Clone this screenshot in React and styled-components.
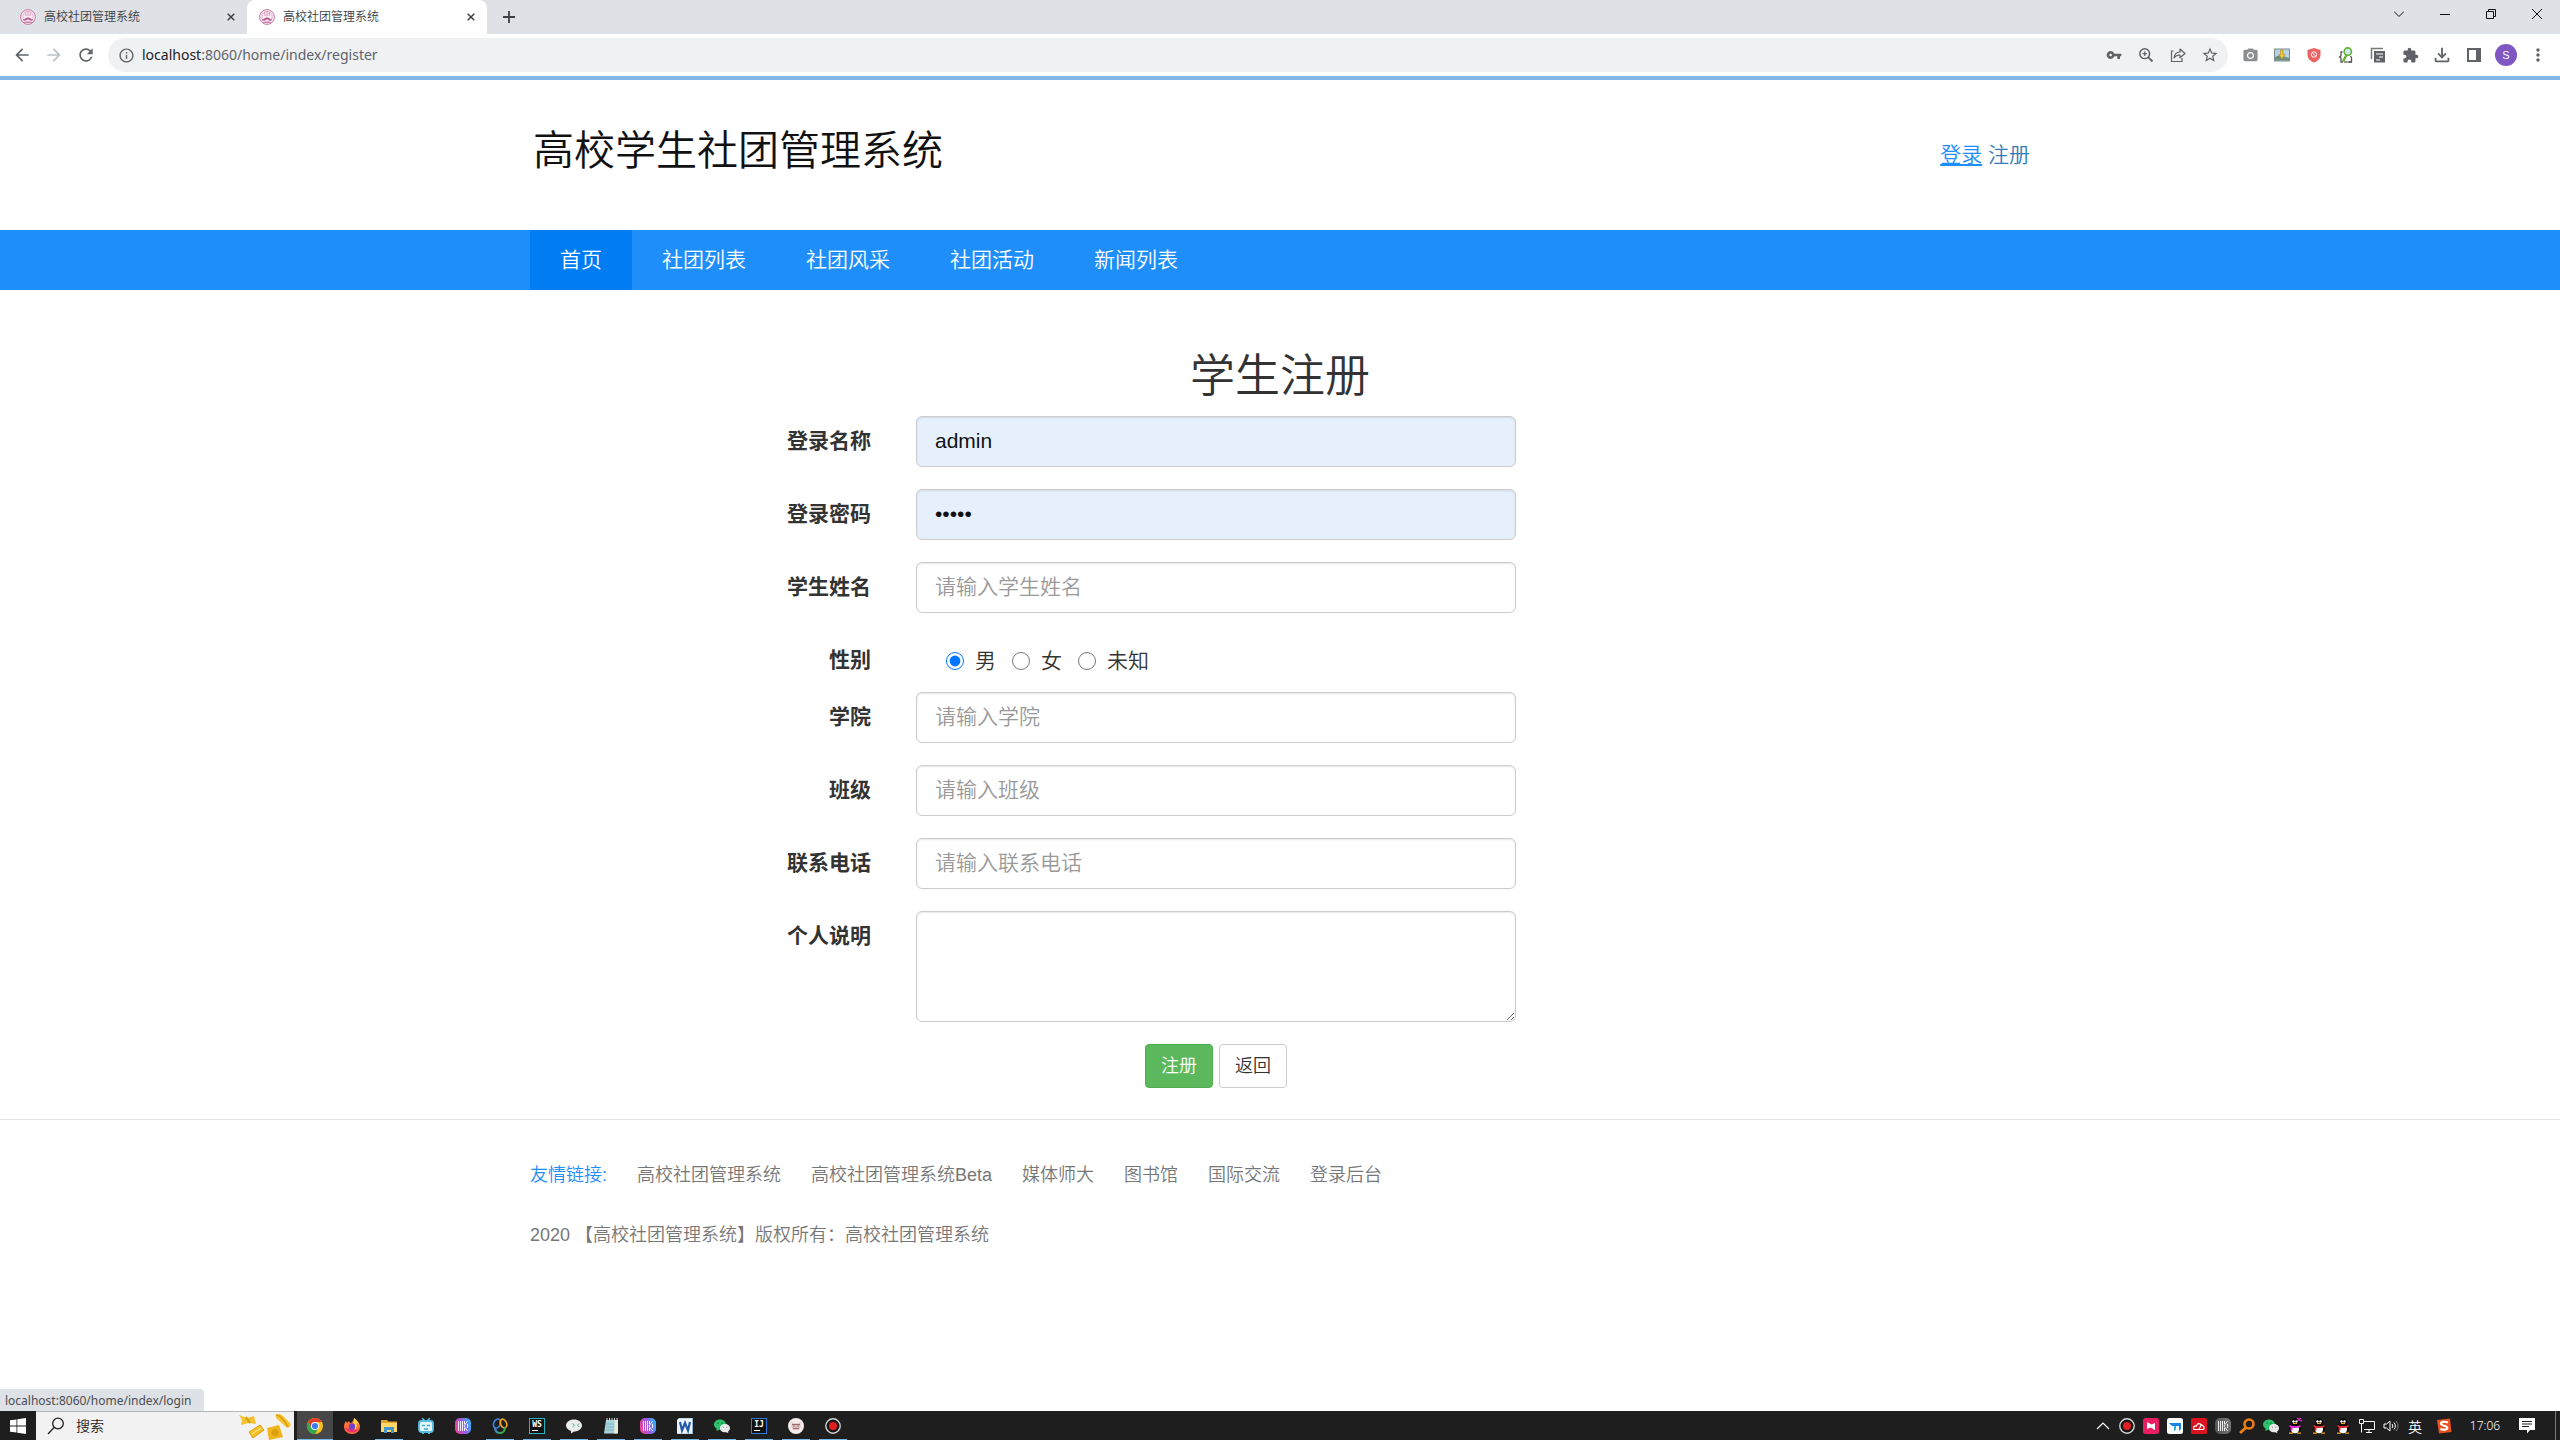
import React from "react";
import styled, { createGlobalStyle, css } from "styled-components";
import {
  MdArrowBack, MdArrowForward, MdRefresh, MdInfoOutline, MdVpnKey,
  MdStarBorder, MdExtension, MdMoreVert, MdPhotoCamera, MdOutlineFileDownload,
} from "react-icons/md";

const pageFont = `"Liberation Sans", "Noto Sans CJK SC", sans-serif`;
const chromeFont = `"Noto Sans", "Noto Sans CJK SC", sans-serif`;

const GlobalStyle = createGlobalStyle`
  *, *::before, *::after { box-sizing: border-box; }
  body { margin: 0; background: #fff; font-family: ${pageFont}; font-weight: 350; color: #333; }
  button, input, textarea { font-family: inherit; font-weight: inherit; margin: 0; }
  svg { display: block; flex: none; }
`;

const Desktop = styled.div`
  min-height: 100vh;
  display: flex;
  flex-direction: column;
`;

/* ---------- browser frame ---------- */

const TabStrip = styled.div`
  display: flex;
  height: 34px;
  background: #dee1e6;
  font-family: ${chromeFont};
`;

const Tab = styled.div`
  display: flex;
  align-items: center;
  gap: 8px;
  width: ${(p) => (p.$active ? 240 : 247)}px;
  padding: 0 8px 0 ${(p) => (p.$active ? 12 : 20)}px;
  border-radius: 8px 8px 0 0;
  background: ${(p) => (p.$active ? "#fff" : "transparent")};
  color: #3c4043;
  font-size: 12px;
  line-height: 18px;
`;

const TabTitle = styled.span`
  flex: 1;
  white-space: nowrap;
`;

const PlainButton = styled.button`
  display: flex;
  align-items: center;
  justify-content: center;
  padding: 0;
  border: 0;
  background: none;
  color: ${(p) => p.$color || "#5f6368"};
`;

const TabButton = styled(PlainButton)`
  width: 16px;
  height: 16px;
`;

const NewTab = styled(PlainButton)`
  width: 44px;
`;

const WindowButtons = styled.div`
  display: flex;
  margin-left: auto;
`;

const WindowButton = styled(PlainButton)`
  width: 46px;
  height: 28px;
`;

const Toolbar = styled.div`
  display: flex;
  align-items: center;
  height: 46px;
  padding: 0 6px;
  border-bottom: 4px solid #84b6ea;
  background: #fff;
`;

const ToolButton = styled(PlainButton)`
  width: 32px;
  height: 32px;
`;

const AddressBar = styled.div`
  display: flex;
  align-items: center;
  flex: 1;
  height: 34px;
  margin: 0 6px;
  padding: 0 2px;
  border-radius: 17px;
  background: #f0f1f3;
`;

const AddressText = styled.div`
  flex: 1;
  color: #5f6368;
  font-family: ${chromeFont};
  font-size: 14px;
  font-weight: 400;
  line-height: 20px;

  b { color: #202124; font-weight: 400; }
`;

const Avatar = styled.span`
  width: 22px;
  height: 22px;
  border-radius: 50%;
  background: #7e57c2;
  color: #fff;
  font-size: 11px;
  line-height: 22px;
  text-align: center;
`;

/* ---------- web page ---------- */

const Viewport = styled.div`
  position: relative;
  flex: 1;
`;

const Container = styled.div`
  width: 100%;
  max-width: 1500px;
  margin: 0 auto;
`;

const Header = styled(Container)`
  display: flex;
  align-items: center;
  justify-content: space-between;
  height: 150px;
`;

const SiteName = styled.div`
  padding: 0 3px 8px;
  color: #111;
  font-size: 41px;
  line-height: 60px;
`;

const AccountLinks = styled.div`
  font-size: 21px;
  line-height: 30px;
`;

const AccountLink = styled.a`
  color: ${(p) => (p.$hover ? "#1e8efb" : "#337ab7")};
  text-decoration: ${(p) => (p.$hover ? "underline" : "none")};
  text-decoration-thickness: 2px;
  text-underline-offset: 2px;
`;

const NavBar = styled.nav`
  background: #1e8efb;
`;

const NavList = styled(Container)`
  display: flex;
`;

const NavLink = styled.a`
  padding: 15px 30px;
  background: ${(p) => (p.$active ? "#007df2" : "transparent")};
  color: #fff;
  font-size: 21px;
  line-height: 30px;
  text-decoration: none;
`;

const Form = styled.form`
  padding: 62px 0 9px;
`;

const Title = styled.h1`
  margin: 0 0 14px;
  font-size: 45px;
  font-weight: inherit;
  line-height: 50px;
  text-align: center;
`;

const FieldRow = styled.div`
  display: grid;
  grid-template-columns: 341px 600px;
  column-gap: 45px;
  margin-bottom: ${(p) => (p.$tight ? 6 : 22)}px;
`;

const labelText = css`
  padding: 10px 0 11px;
  font-size: 21px;
  font-weight: 700;
  line-height: 30px;
  text-align: right;
`;

const Label = styled.label`
  ${labelText}
`;

const GroupLabel = styled.span`
  ${labelText}
`;

const controlBox = css`
  width: 100%;
  border: 1px solid #ccc;
  border-radius: 6px;
  background: ${(p) => (p.$filled ? "#e6effc" : "#fff")};
  box-shadow: inset 0 1px 2px rgba(0, 0, 0, 0.1);
  color: #111;
  font-size: 21px;
  line-height: 30px;
  outline: 0;
`;

const Input = styled.input`
  ${controlBox}
  height: 51px;
  padding: 8px 18px 10px;
  &::placeholder { color: #999; opacity: 1; }
`;

const TextArea = styled.textarea`
  ${controlBox}
  display: block;
  height: 111px;
  padding: 8px 18px 10px;
  resize: vertical;
`;

const RadioGroup = styled.div`
  display: flex;
  align-items: center;
  gap: 16px;
  padding-left: 30px;
`;

const RadioLabel = styled.label`
  display: flex;
  align-items: center;
  gap: 11px;
  font-size: 21px;
  line-height: 30px;
`;

const Radio = styled.input`
  width: 18px;
  height: 18px;
  accent-color: #0075ff;
`;

const Actions = styled.div`
  grid-column: 2;
  display: flex;
  justify-content: center;
  gap: 6px;
`;

const ActionButton = styled.button`
  height: 44px;
  padding: 0 15px;
  border: 1px solid ${(p) => (p.$primary ? "#4cae4c" : "#ccc")};
  border-radius: 4px;
  background: ${(p) => (p.$primary ? "#5cb85c" : "#fff")};
  color: ${(p) => (p.$primary ? "#fff" : "#333")};
  font-size: 18px;
  line-height: 26px;
`;

const Footer = styled.footer`
  padding-top: 40px;
  border-top: 1px solid #e2e2e2;
  color: #777;
  font-size: 18px;
  line-height: 30px;
`;

const FooterLinks = styled(Container)`
  display: flex;
  gap: 30px;
  margin-bottom: 30px;
`;

const FooterHeading = styled.span`
  color: #1e8efb;
`;

const FooterLink = styled.a`
  color: #777;
  text-decoration: none;
`;

const StatusBubble = styled.div`
  position: absolute;
  left: 0;
  bottom: 0;
  min-width: 204px;
  padding: 3px 8px 1px 5px;
  border-radius: 0 4px 0 0;
  background: #dee1e6;
  color: #4a4d51;
  font-family: ${chromeFont};
  font-size: 12px;
  font-weight: 400;
  line-height: 18px;
`;

/* ---------- taskbar ---------- */

const TaskBar = styled.div`
  display: flex;
  height: 29px;
  background: #1e1e1e;
  color: #fff;
  font-family: ${chromeFont};
`;

const StartButton = styled(PlainButton)`
  width: 36px;
`;

const SearchBox = styled.label`
  display: flex;
  align-items: center;
  width: 258px;
  margin-right: 3px;
  padding: 0 2px 0 11px;
  border-top: 1px solid #b5b5b5;
  background: #f2f2f2;
`;

const SearchInput = styled.input`
  flex: 1;
  min-width: 0;
  padding: 0 0 0 11px;
  border: 0;
  background: none;
  font-size: 14px;
  line-height: 20px;
  outline: 0;
  &::placeholder { color: #222; opacity: 1; }
`;

const TaskButton = styled(PlainButton)`
  width: 36px;
  margin-right: 1px;
  background-color: ${(p) => (p.$active ? "#474747" : "transparent")};
  background-image: ${(p) => (p.$open || p.$active ? "linear-gradient(#76b9ed, #76b9ed)" : "none")};
  background-repeat: no-repeat;
  background-position: bottom center;
  background-size: ${(p) => (p.$active ? 36 : 28)}px 1px;
`;

const Tray = styled.div`
  display: flex;
  align-items: stretch;
  margin-left: auto;
`;

const TrayButton = styled(PlainButton)`
  width: 24px;
`;

const TrayWide = styled(PlainButton)`
  width: ${(p) => p.$w}px;
  color: #fff;
  font-size: ${(p) => p.$size || 12}px;
`;

const ShowDesktop = styled(PlainButton)`
  width: 5px;
  margin-left: 10px;
  border-left: 1px solid #777;
`;

/* ---------- drawings ---------- */

const Svg = ({ size = 16, box = 16, children, ...rest }) => (
  <svg width={size} height={size} viewBox={`0 0 ${box} ${box}`} fill="none" aria-hidden="true" {...rest}>
    {children}
  </svg>
);

const Favicon = () => (
  <Svg>
    <circle cx="8" cy="8" r="7.4" fill="#f9e9f2" stroke="#c77ba6" />
    <circle cx="8" cy="7.5" r="5.2" stroke="#d9a1c2" strokeWidth=".7" />
    <path d="M8 2v5M5.500 3l.5 4M10.500 3l-.5 4" stroke="#d08bb3" strokeWidth=".8" />
    <path d="M3 10.500c2 0 3-2 5-2s3 2 5 2v1H10c0-1.500-4-1.500-4 0H3z" fill="#b0568a" />
    <path d="M4 13.400h8" stroke="#c77ba6" />
  </Svg>
);

const Cross = ({ size = 8 }) => (
  <Svg size={size} box={8}><path d="M.7.7l6.600 6.600M7.300.7L.7 7.300" stroke="currentColor" strokeWidth="1.500" /></Svg>
);

const ZoomPlus = () => (
  <Svg>
    <circle cx="6.700" cy="6.700" r="4.900" stroke="currentColor" strokeWidth="1.500" />
    <path d="M10.300 10.300l4.200 4.200" stroke="currentColor" strokeWidth="1.800" />
    <path d="M6.700 4.400v4.600M4.400 6.700h4.600" stroke="currentColor" strokeWidth="1.200" />
  </Svg>
);

const Share = () => (
  <Svg>
    <path d="M3.500 4H1.500v10.500h10.500V11" stroke="currentColor" strokeWidth="1.200" />
    <path d="M4 11c.3-4 2.500-5.800 6-6V2l5 4.500-5 4.300V8C7.500 7.900 5.500 8.800 4 11z" stroke="currentColor" strokeWidth="1.200" strokeLinejoin="round" />
  </Svg>
);

const PictureDown = () => (
  <Svg>
    <rect x=".5" y="2" width="15" height="12" fill="#b5d2e6" stroke="#83898d" />
    <path d="M1 10l5-2 9 3v2.500H1z" fill="#6f8f7c" />
    <path d="M6.500 3h2.500v4.500H11L8 12 5 7.500h1.500z" fill="#f3c62e" stroke="#b78a19" strokeWidth=".6" />
  </Svg>
);

const Shield = () => (
  <Svg>
    <path d="M8 1l6.500 2v4.500C14.500 11.500 12 14 8 15.500 4 14 1.500 11.500 1.500 7.500V3z" fill="#e86464" />
    <circle cx="8" cy="7.500" r="2.700" stroke="#fff" strokeWidth=".9" />
    <path d="M6.200 5.700l3.600 3.600" stroke="#fff" strokeWidth=".9" />
  </Svg>
);

const BraceSearch = () => (
  <Svg>
    <path d="M4.500 5H3v4L1.500 10 3 11v4h2M12.500 9l1 1.500V15H11" stroke="#555" strokeWidth="1.300" />
    <path d="M8.500 8L5 14.500" stroke="#62b32e" strokeWidth="2.400" />
    <circle cx="9.800" cy="4.600" r="3.700" fill="#cfeaf4" stroke="#62b32e" strokeWidth="1.600" />
    <path d="M6 15h7" stroke="#555" strokeWidth="1.200" />
  </Svg>
);

const Pages = () => (
  <Svg>
    <path d="M1.500 12V1.500H13" stroke="#777" strokeWidth="1.500" />
    <path d="M4 4h11v11.500H4z" fill="#5f6368" />
    <path d="M6 7h7M9 10h4M6 13h4" stroke="#fff" strokeWidth="1.200" />
  </Svg>
);

const SidePanel = () => (
  <Svg><path d="M2 2h12v12H2z" stroke="currentColor" strokeWidth="2" /><path d="M10 2h4v12h-4z" fill="currentColor" /></Svg>
);

const WindowsLogo = () => (
  <Svg><path d="M0 2.300l6.500-.9v6.200H0zM7.300 1.300L16 0v7.600H7.300zM0 8.400h6.500v6.200L0 13.700zM7.300 8.400H16V16l-8.700-1.300z" fill="#fff" /></Svg>
);

const SearchGlass = () => (
  <Svg size={18} box={18}><circle cx="11" cy="6.500" r="5.300" stroke="#222" strokeWidth="1.300" /><path d="M7 10.500L1 17" stroke="#222" strokeWidth="1.300" /></Svg>
);

const Pasta = () => (
  <svg width="54" height="27" viewBox="0 0 54 27" aria-hidden="true">
    <path d="M1 2l8 3 7-2 2 8-7-1-8 2 1-5z" fill="#f2c230" />
    <path d="M8 4l4 6" stroke="#d79a13" strokeWidth="2" />
    <path d="M11 19l11-7 4 5-11 8z" fill="#f5bf22" stroke="#dca016" />
    <path d="M14 21l9-6" stroke="#ffdf70" strokeWidth="1.500" />
    <path d="M29 15l12-3 4 12-14 3z" fill="#f0b51c" />
    <circle cx="37" cy="19.500" r="3.600" fill="#dca00f" />
    <path d="M38 2c2-2 5-1 7 1l7 7c2 2-1 6-4 4l-9-8c-1-1-2-3-1-4z" fill="#f6c52c" />
    <path d="M38 2c3 0 9 5 12 12" stroke="#d99c13" strokeWidth="1.500" fill="none" />
  </svg>
);

const Chrome = () => (
  <Svg>
    <circle cx="8" cy="8" r="8" fill="#fbc116" />
    <path d="M1.100 4A8 8 0 0 0 8 16l3.500-6H4.500z" fill="#2da94f" />
    <path d="M1.100 4A8 8 0 0 1 14.900 4H8L4.500 10z" fill="#e33b2e" />
    <circle cx="8" cy="8" r="4" fill="#fff" />
    <circle cx="8" cy="8" r="3.100" fill="#3b7ded" />
  </Svg>
);

const Firefox = () => (
  <Svg>
    <path d="M10 0c3 2 6 5 6 9a8 7 0 0 1-16 0c0-3 1-5 2-6l1 2 2-2 1 2c2 0 3-2 4-5z" fill="#ff7139" />
    <path d="M10 0c3 2 5 5 5.500 8-1-2-2-3-3-3 1 4 0 7-4 7 4-3 2-6 .5-7C10 3 10 2 10 0z" fill="#ffd43b" />
    <path d="M1 10a7.500 6 0 0 0 14 1c-2 1-4 1-6 0z" fill="#f0306b" />
    <circle cx="8" cy="8.500" r="3.200" fill="#7542c9" />
  </Svg>
);

const Folder = () => (
  <Svg>
    <path d="M0 2h6l1.500 1.500H16V14H0z" fill="#e2a52c" />
    <path d="M0 5h16v9H0z" fill="#ffd869" />
    <path d="M3 15V9h10v6h-3v-3H6v3z" fill="#4297cf" />
  </Svg>
);

const Bili = () => (
  <Svg>
    <path d="M4 0l3 3M12 0L9 3" stroke="#56bde0" strokeWidth="1.500" />
    <rect x="1" y="3" width="14" height="11" rx="2.500" fill="#e5f8ff" stroke="#56bde0" strokeWidth="1.800" />
    <path d="M4 7.500h3M9 7.500h3M6 11h4" stroke="#42a6cd" strokeWidth="1.300" />
    <path d="M4 15.500h2M10 15.500h2" stroke="#56bde0" />
  </Svg>
);

const Stripes = ({ id, mono }) => (
  <Svg>
    <defs>
      <linearGradient id={id} x1="0" y1=".6" x2="1" y2=".3">
        <stop offset="0" stopColor={mono ? "#555" : "#f0419a"} />
        <stop offset=".5" stopColor={mono ? "#666" : "#9a5be6"} />
        <stop offset="1" stopColor={mono ? "#777" : "#2fb5f5"} />
      </linearGradient>
    </defs>
    <rect width="16" height="16" rx="5" fill={`url(#${id})`} />
    <path d="M3.500 3v10M5.500 3v10M7.500 3v10M9 8l3.500-5M9 8l3.500 5M9.500 3v3M9.500 10v3M12.500 6v4" stroke="#fff" strokeWidth=".9" />
  </Svg>
);

const Loops = () => (
  <Svg>
    <ellipse cx="5" cy="5.500" rx="3.300" ry="4.700" transform="rotate(25 5 5.500)" stroke="#3f7fe0" strokeWidth="1.700" />
    <ellipse cx="11.500" cy="5.500" rx="3" ry="4.500" transform="rotate(-25 11.500 5.500)" stroke="#f2a420" strokeWidth="1.700" />
    <path d="M3 9c0 4 2 6 5 6s5-2 5-6" stroke="#3cad51" strokeWidth="1.800" />
    <path d="M3 9c0 3 1 5 3 5.800" stroke="#3f7fe0" strokeWidth="1.800" />
  </Svg>
);

const JetBrains = ({ text, color }) => (
  <Svg>
    <rect x=".5" y=".5" width="15" height="15" fill="#111" stroke={color} />
    <text x="8" y="9" textAnchor="middle" fill="#fff" fontSize="8" fontWeight="700" fontFamily="DejaVu Sans Mono, monospace">{text}</text>
    <path d="M3 12.500h6" stroke="#fff" />
  </Svg>
);

const Chat = () => (
  <Svg>
    <path d="M8 1.500c4.500 0 8 2.700 8 6s-3.500 6-8 6l-3 2v-2.500C2 12 0 10 0 7.500c0-3.300 3.500-6 8-6z" fill="#ececec" />
    <path d="M6.500 5.500l2 1.700-2 1.700M13 5.500l-1.500 1.700 1.500 1.700" stroke="#47b98b" />
  </Svg>
);

const Notes = () => (
  <Svg>
    <path d="M3 2h12l-1 13.500H1z" fill="#a7d4dc" />
    <path d="M12 2h3v13.500h-4z" fill="#e9ead8" />
    <path d="M4 0v3M6.500 0v3M9 0v3M11.500 0v3M14 0v3" stroke="#ddd" />
    <path d="M3 6h8M3 9h8M2.500 12H11" stroke="#79b3bf" strokeWidth=".8" />
  </Svg>
);

const Word = () => (
  <Svg>
    <path d="M2 0h13.500v16H0V2z" fill="#edf4fb" />
    <path d="M2 0h13.500v16H0" stroke="#8fb4da" strokeWidth=".8" />
    <path d="M3 4l2 8.500L8 5l3 7.500L13 4" stroke="#2259a8" strokeWidth="2.200" />
  </Svg>
);

const WeChat = () => (
  <Svg>
    <path d="M6 1.500c3.300 0 6 2.200 6 5s-2.700 5-6 5L2.500 13v-2.500C1 9.600 0 8.200 0 6.500c0-2.800 2.700-5 6-5z" fill="#2dc26b" />
    <path d="M11 6c2.800 0 5 1.800 5 4.200 0 1.300-.7 2.300-1.800 3.100v1.700L12 14.200C9 14.600 6 13 6 10.200 6 7.800 8.200 6 11 6z" fill="#e9e9e9" />
    <path d="M4 4.500v1.500M8 4.500v1.500" stroke="#12713a" />
    <path d="M9.500 8.800v1M12.800 8.800v1" stroke="#888" />
  </Svg>
);

const Mascot = () => (
  <Svg>
    <circle cx="8" cy="8" r="8" fill="#f4eceb" />
    <path d="M3.500 4c2 2 7 2 9 0v6c-2 3-7 3-9 0z" fill="#e0bdbd" />
    <path d="M4 6.500h8M5 10.500h6" stroke="#8d5558" strokeWidth=".8" />
    <path d="M5.500 8h1M9.500 8h1" stroke="#444" />
  </Svg>
);

const Recorder = () => (
  <Svg><circle cx="8" cy="8" r="7.200" fill="#161616" stroke="#d5d5d5" strokeWidth="1.400" /><circle cx="8" cy="8" r="4" fill="#e02020" /></Svg>
);

const PinkApp = () => (
  <Svg><rect width="16" height="16" rx="2.500" fill="#e91e63" /><path d="M4 4l4.500 2.500L12 5v7L7.500 9.500 4 11z" fill="#fff" /></Svg>
);

const BlueApp = () => (
  <Svg><rect width="16" height="16" rx="2.500" fill="#fff" /><path d="M2 5h12v6l-2 2V8H9v3l-2 2V8H5z" fill="#1686e8" /><path d="M7 8h2v3l-2 2z" fill="#27b6d6" /></Svg>
);

const RedCloud = () => (
  <Svg><rect width="16" height="16" rx="1.500" fill="#db1320" /><path d="M3 11.500c-1.500-3 1-4 2.500-3.500C6 5 9.500 5 10 7.500c3-1 4 3 2 4H3zM8 11l3-5" stroke="#fff" strokeWidth="1.200" /></Svg>
);

const OrangeGlass = () => (
  <Svg><circle cx="10" cy="6" r="4.500" stroke="#ee7d12" strokeWidth="2.600" /><path d="M7 9.500L1 15" stroke="#ee7d12" strokeWidth="2.800" /></Svg>
);

const Penguin = ({ scarf, bow }) => (
  <Svg>
    <ellipse cx="8" cy="10" rx="6" ry="5" fill="#050505" />
    <ellipse cx="8" cy="11" rx="4" ry="4.200" fill="#fff" />
    <ellipse cx="8" cy="4.500" rx="4.200" ry="4.300" fill="#050505" />
    <circle cx="6.500" cy="3.500" r="1.200" fill="#fff" /><circle cx="9.500" cy="3.500" r="1.200" fill="#fff" />
    <path d="M6 5.500h4" stroke="#f3a019" strokeWidth="1.200" />
    <path d="M2.500 7.800c3 1.500 8 1.500 11 0M4.500 8.500v4" stroke={scarf} strokeWidth="2" />
    <path d="M2 15.200h4M10 15.200h4" stroke="#f3a019" strokeWidth="1.200" />
    {bow && <path d="M10 0l5 3M10 3l4-3" stroke={scarf} strokeWidth="1.500" />}
  </Svg>
);

const Network = () => (
  <Svg><path d="M4.500 3.500h11v8H5M.5 1.500h4v4h-4zM2.500 5.500v9M7 14.500h6M10 11.500v3" stroke="#fff" /></Svg>
);

const Speaker = () => (
  <Svg><path d="M1 6h2.500L7 3v10L3.500 10H1zM9 6c1 1.300 1 2.700 0 4M11 4.500c1.800 2.300 1.800 4.700 0 7" stroke="#fff" /><path d="M13 3c2.700 3.200 2.700 6.800 0 10" stroke="#888" /></Svg>
);

const Sogou = () => (
  <Svg>
    <path d="M1 2l13-1.500L15.500 14 3 15.500z" fill="#e8501e" />
    <path d="M12 4.500C8 3 4.500 4 5 6s6 1.500 6.300 3.700c.2 2-3.800 2.600-7 1.300" stroke="#fff" strokeWidth="2.200" />
  </Svg>
);

const Notice = () => (
  <Svg><path d="M0 0h16v12h-5l-3 3.500V12H0z" fill="#fff" /><path d="M3 3.500h10M3 6h10M3 8.500h7" stroke="#222" /></Svg>
);

/* ---------- data ---------- */

const navItems = ["首页", "社团列表", "社团风采", "社团活动", "新闻列表"];
const footerItems = ["高校社团管理系统", "高校社团管理系统Beta", "媒体师大", "图书馆", "国际交流", "登录后台"];

const fieldsTop = [
  { id: "loginName", label: "登录名称", type: "text", value: "admin" },
  { id: "password", label: "登录密码", type: "password", value: "admin" },
  { id: "studentName", label: "学生姓名", type: "text", hint: "请输入学生姓名" },
];
const fieldsBottom = [
  { id: "college", label: "学院", type: "text", hint: "请输入学院" },
  { id: "className", label: "班级", type: "text", hint: "请输入班级" },
  { id: "phone", label: "联系电话", type: "tel", hint: "请输入联系电话" },
];

const extensions = [
  ["截图", <MdPhotoCamera size={17} color="#8c8f92" />],
  ["图片下载", <PictureDown />],
  ["拦截", <Shield />],
  ["查找", <BraceSearch />],
  ["阅读", <Pages />],
  ["扩展程序", <MdExtension size={17} />],
  ["下载", <MdOutlineFileDownload size={22} />],
  ["侧边栏", <SidePanel />],
];

const tasks = [
  ["Chrome", <Chrome />, "active"],
  ["Firefox", <Firefox />],
  ["文件", <Folder />, "open"],
  ["视频", <Bili />],
  ["工具", <Stripes id="stripesA" />],
  ["Navicat", <Loops />, "open"],
  ["WebStorm", <JetBrains text="WS" color="#2bb5c0" />, "open"],
  ["聊天", <Chat />, "open"],
  ["记事本", <Notes />, "open"],
  ["工具", <Stripes id="stripesB" />, "open"],
  ["Word", <Word />, "open"],
  ["微信", <WeChat />, "open"],
  ["IDEA", <JetBrains text="IJ" color="#2f78e0" />, "open"],
  ["助手", <Mascot />, "open"],
  ["录屏", <Recorder />, "open"],
];

const trayItems = [
  ["展开", <Svg><path d="M2 11l6-6 6 6" stroke="#fff" strokeWidth="1.200" /></Svg>],
  ["录屏", <Recorder />],
  ["会议", <PinkApp />],
  ["协作", <BlueApp />],
  ["云", <RedCloud />],
  ["工具", <Stripes id="stripesC" mono />],
  ["搜索", <OrangeGlass />],
  ["微信", <WeChat />],
  ["QQ 1", <Penguin scarf="#e22ad0" bow />],
  ["QQ 2", <Penguin scarf="#d92b2b" />],
  ["QQ 3", <Penguin scarf="#d92b2b" />],
  ["网络", <Network />],
  ["音量", <Speaker />],
];

const Field = ({ id, label, type, value, hint }) => (
  <FieldRow>
    <Label htmlFor={id}>{label}</Label>
    <Input id={id} type={type} defaultValue={value} placeholder={hint} $filled={!!value} />
  </FieldRow>
);

export default function App() {
  return (
    <Desktop>
      <GlobalStyle />
      <TabStrip>
        {[false, true].map((active) => (
          <Tab key={String(active)} $active={active}>
            <Favicon />
            <TabTitle>高校社团管理系统</TabTitle>
            <TabButton aria-label="关闭标签页" $color="#3c4043"><Cross /></TabButton>
          </Tab>
        ))}
        <NewTab aria-label="新标签页" $color="#3c4043">
          <Svg size={12} box={12}><path d="M6 0v12M0 6h12" stroke="currentColor" strokeWidth="1.800" /></Svg>
        </NewTab>
        <WindowButtons>
          <WindowButton aria-label="搜索标签页" $color="#111"><Svg size={10} box={10}><path d="M0 2.500l5 5 5-5" stroke="currentColor" /></Svg></WindowButton>
          <WindowButton aria-label="最小化" $color="#111"><Svg size={10} box={10}><path d="M0 5.500h10" stroke="currentColor" /></Svg></WindowButton>
          <WindowButton aria-label="还原" $color="#111"><Svg size={10} box={10}><path d="M.5 2.500h7v7h-7zM2.500 2.500v-2h7v7h-2" stroke="currentColor" /></Svg></WindowButton>
          <WindowButton aria-label="关闭" $color="#111"><Svg size={10} box={10}><path d="M0 0l10 10M10 0L0 10" stroke="currentColor" /></Svg></WindowButton>
        </WindowButtons>
      </TabStrip>
      <Toolbar>
        <ToolButton aria-label="后退"><MdArrowBack size={20} /></ToolButton>
        <ToolButton aria-label="前进" $color="#bdc1c6"><MdArrowForward size={20} /></ToolButton>
        <ToolButton aria-label="刷新"><MdRefresh size={20} /></ToolButton>
        <AddressBar>
          <ToolButton aria-label="网站信息"><MdInfoOutline size={17} /></ToolButton>
          <AddressText><b>localhost</b>:8060/home/index/register</AddressText>
          <ToolButton aria-label="密码"><MdVpnKey size={16} /></ToolButton>
          <ToolButton aria-label="缩放"><ZoomPlus /></ToolButton>
          <ToolButton aria-label="分享"><Share /></ToolButton>
          <ToolButton aria-label="收藏"><MdStarBorder size={18} /></ToolButton>
        </AddressBar>
        {extensions.map(([name, icon]) => (
          <ToolButton key={name} aria-label={name}>{icon}</ToolButton>
        ))}
        <ToolButton aria-label="用户"><Avatar>S</Avatar></ToolButton>
        <ToolButton aria-label="菜单"><MdMoreVert size={20} /></ToolButton>
      </Toolbar>

      <Viewport>
        <Header as="header">
          <SiteName>高校学生社团管理系统</SiteName>
          <AccountLinks>
            <AccountLink href="#login" $hover>登录</AccountLink>{" "}
            <AccountLink href="#register">注册</AccountLink>
          </AccountLinks>
        </Header>
        <NavBar>
          <NavList>
            {navItems.map((item, i) => (
              <NavLink key={item} href="#nav" $active={i === 0}>{item}</NavLink>
            ))}
          </NavList>
        </NavBar>
        <Container as="main">
          <Form onSubmit={(e) => e.preventDefault()}>
            <Title>学生注册</Title>
            {fieldsTop.map((f) => <Field key={f.id} {...f} />)}
            <FieldRow $tight role="radiogroup" aria-labelledby="genderLabel">
              <GroupLabel id="genderLabel">性别</GroupLabel>
              <RadioGroup>
                {["男", "女", "未知"].map((g, i) => (
                  <RadioLabel key={g}>
                    <Radio type="radio" name="gender" defaultChecked={i === 0} />
                    {g}
                  </RadioLabel>
                ))}
              </RadioGroup>
            </FieldRow>
            {fieldsBottom.map((f) => <Field key={f.id} {...f} />)}
            <FieldRow>
              <Label htmlFor="intro">个人说明</Label>
              <TextArea id="intro" />
            </FieldRow>
            <FieldRow>
              <Actions>
                <ActionButton type="submit" $primary>注册</ActionButton>
                <ActionButton type="button">返回</ActionButton>
              </Actions>
            </FieldRow>
          </Form>
        </Container>
        <Footer>
          <FooterLinks>
            <FooterHeading>友情链接:</FooterHeading>
            {footerItems.map((item) => <FooterLink key={item} href="#link">{item}</FooterLink>)}
          </FooterLinks>
          <Container>2020 【高校社团管理系统】版权所有：高校社团管理系统</Container>
        </Footer>
        <StatusBubble>localhost:8060/home/index/login</StatusBubble>
      </Viewport>

      <TaskBar>
        <StartButton aria-label="开始"><WindowsLogo /></StartButton>
        <SearchBox>
          <SearchGlass />
          <SearchInput type="text" placeholder="搜索" aria-label="搜索" />
          <Pasta />
        </SearchBox>
        {tasks.map(([name, icon, state], i) => (
          <TaskButton key={i} aria-label={name} $active={state === "active"} $open={state === "open"}>{icon}</TaskButton>
        ))}
        <Tray>
          {trayItems.map(([name, icon]) => (
            <TrayButton key={name} aria-label={name}>{icon}</TrayButton>
          ))}
          <TrayWide $w={24} $size={14}>英</TrayWide>
          <TrayWide $w={34} aria-label="输入法"><Sogou /></TrayWide>
          <TrayWide $w={48}>17:06</TrayWide>
          <TrayWide $w={36} aria-label="通知"><Notice /></TrayWide>
          <ShowDesktop aria-label="显示桌面" />
        </Tray>
      </TaskBar>
    </Desktop>
  );
}
